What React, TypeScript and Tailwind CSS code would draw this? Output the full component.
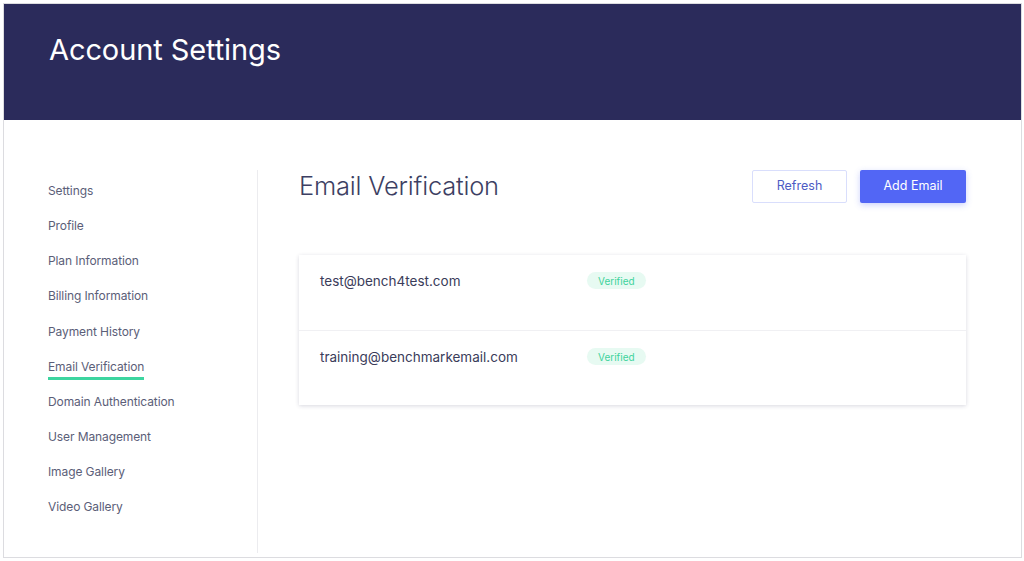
import React from 'react'

const navItems = [
  'Settings',
  'Profile',
  'Plan Information',
  'Billing Information',
  'Payment History',
  'Email Verification',
  'Domain Authentication',
  'User Management',
  'Image Gallery',
  'Video Gallery',
]

const emails = ['test@bench4test.com', 'training@benchmarkemail.com']

export default function App() {
  return (
    <div className="h-[561px] w-[1024px] bg-white p-[3px] font-['Inter',sans-serif]">
      <div className="flex h-[555px] w-[1019px] flex-col border border-[#dcdce0] bg-white">
        {/* header */}
        <div className="flex h-[116px] shrink-0 items-start bg-[#2b2b5b] pl-[45px] pt-[24px]">
          <h1 className="text-[29px] font-normal tracking-[-0.1px] text-white">Account Settings</h1>
        </div>

        <div className="flex flex-1 pt-[50px]">
          {/* sidebar */}
          <nav className="mb-[4px] flex w-[254px] flex-col border-r border-[#ececef] pl-[44px] pt-[7px]">
            {navItems.map(item => {
              const active = item === 'Email Verification'
              return (
                <div key={item} className="h-[35.15px]">
                  <span className={`inline-block text-[12px] leading-[18px] tracking-[-0.1px] text-[#5b5e78] ${active ? 'border-b-[3px] border-[#3dd5a0] pb-[1px]' : ''}`}>
                    {item}
                  </span>
                </div>
              )
            })}
          </nav>

          {/* main */}
          <main className="flex-1 pl-[41px] pr-[55px]">
            <div className="flex items-start justify-between">
              <h2 className="text-[25.5px] font-light leading-[32px] tracking-[-0.2px] text-[#3d3f63]">Email Verification</h2>
              <div className="flex gap-[13px]">
                <button className="h-[33px] w-[95px] rounded-[2px] border border-[#d9defc] bg-white text-[12.5px] text-[#4d5bc4]">
                  Refresh
                </button>
                <button className="h-[33px] w-[106px] rounded-[2px] bg-[#5266f5] text-[12.5px] text-white shadow-[0_2px_6px_rgba(82,102,245,0.3)]">
                  Add Email
                </button>
              </div>
            </div>

            <div className="mt-[52px] bg-white shadow-[0_1px_4px_rgba(40,40,80,0.18)]">
              {emails.map((email, i) => (
                <div key={email} className={`flex h-[75px] items-start pl-[21px] pt-[16px] ${i > 0 ? 'border-t border-[#f0f0f3]' : ''}`}>
                  <span className="w-[267px] text-[13.5px] text-[#3a3c5a]">{email}</span>
                  <span className="mt-[1px] rounded-full bg-[#e7faf2] px-[11px] py-[1.5px] text-[10px] leading-[14px] text-[#3fd39c]">
                    Verified
                  </span>
                </div>
              ))}
            </div>
          </main>
        </div>
      </div>
    </div>
  )
}
